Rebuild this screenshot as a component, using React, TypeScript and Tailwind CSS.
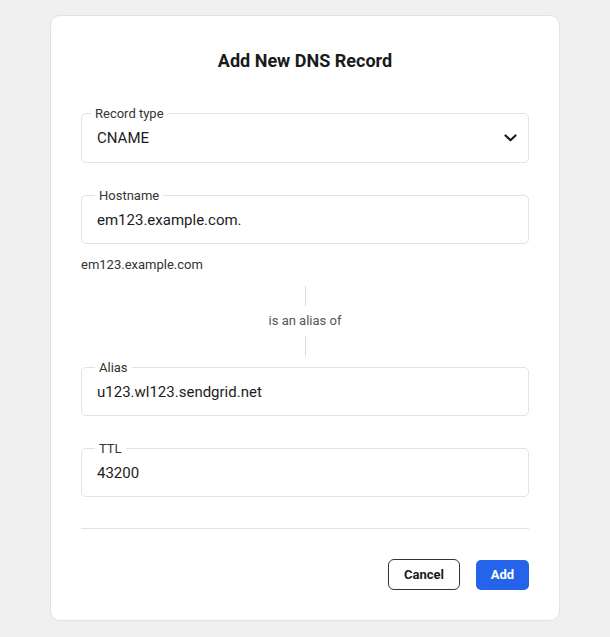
import type { ReactNode } from "react";

type FieldProps = {
  label: string;
  value: string;
  heightClass: string;
  labelClass?: string;
  trailing?: ReactNode;
};

function OutlinedField({ label, value, heightClass, labelClass = "left-[13px]", trailing }: FieldProps) {
  return (
    <div
      className={`relative flex items-center rounded-[5px] border border-[#e2e2e2] pl-[15px] pr-[11px] ${heightClass}`}
    >
      <span
        className={`absolute top-0 -translate-y-1/2 bg-white px-1 text-[13px] leading-4 text-[#333] ${labelClass}`}
      >
        {label}
      </span>
      <span className="flex-1 text-[15px] leading-5 text-[#1c1c1c]">{value}</span>
      {trailing}
    </div>
  );
}

function Chevron() {
  return (
    <svg width="13" height="8" viewBox="0 0 13 8" fill="none" aria-hidden>
      <path
        d="M1.5 1.5 L6.5 6.2 L11.5 1.5"
        stroke="#1c1c1c"
        strokeWidth="2.2"
        strokeLinecap="round"
        strokeLinejoin="round"
      />
    </svg>
  );
}

export default function App() {
  return (
    <div className="min-h-screen bg-[#f0f0f0] pt-[15px] font-['Roboto','Liberation_Sans',sans-serif]">
      <div className="mx-auto w-[510px] rounded-[10px] border border-[#e2e2e2] bg-white px-[30px] pb-[30px] pt-[33px]">
        <h2 className="text-center text-[18px] font-bold leading-6 text-[#1a1a1a]">
          Add New DNS Record
        </h2>

        <div className="mt-10">
          <OutlinedField
            label="Record type"
            value="CNAME"
            heightClass="h-[50px]"
            labelClass="left-[9px]"
            trailing={<Chevron />}
          />
        </div>

        <div className="mt-8">
          <OutlinedField label="Hostname" value="em123.example.com." heightClass="h-[49px]" />
        </div>

        <p className="mt-[13px] text-[13px] leading-4 text-[#333]">em123.example.com</p>

        <div className="mt-[13px] flex flex-col items-center">
          <div className="h-5 w-px bg-[#dcdcdc]" />
          <p className="py-[7px] text-[13px] leading-4 text-[#555]">is an alias of</p>
          <div className="h-5 w-px bg-[#dcdcdc]" />
        </div>

        <div className="mt-[11px]">
          <OutlinedField label="Alias" value="u123.wl123.sendgrid.net" heightClass="h-[49px]" />
        </div>

        <div className="mt-8">
          <OutlinedField label="TTL" value="43200" heightClass="h-[49px]" />
        </div>

        <div className="mt-[31px] h-px bg-[#e2e2e2]" />

        <div className="mt-[30px] flex items-center justify-end gap-4">
          <button
            type="button"
            className="h-[31px] w-[72px] rounded-[6px] border border-[#333] bg-white text-[13px] font-bold text-[#1a1a1a]"
          >
            Cancel
          </button>
          <button
            type="button"
            className="h-[30px] w-[53px] rounded-[5px] bg-[#2563eb] text-[13px] font-bold text-white"
          >
            Add
          </button>
        </div>
      </div>
    </div>
  );
}
